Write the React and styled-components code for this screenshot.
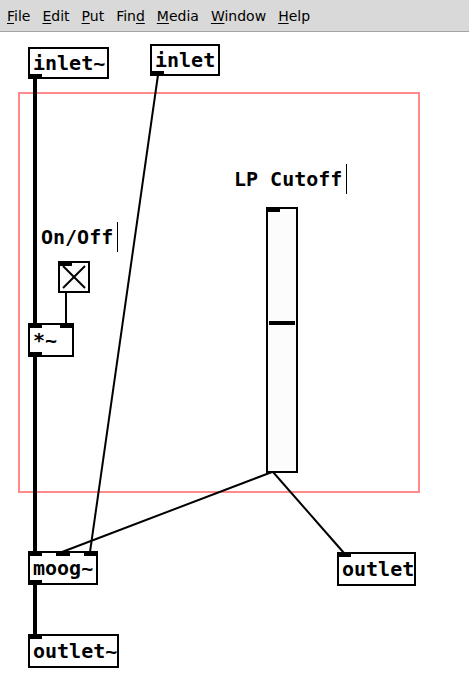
import React from "react";
import styled, { createGlobalStyle } from "styled-components";

const Global = createGlobalStyle`
  html, body { margin: 0; padding: 0; background: #fff; }
  body { width: 469px; height: 698px; overflow: hidden; }
`;

const Page = styled.div`
  width: 469px;
  height: 698px;
  display: flex;
  flex-direction: column;
  background: #fff;
`;

const MenuBar = styled.div`
  height: 31px;
  flex: 0 0 31px;
  display: flex;
  align-items: center;
  gap: 12px;
  padding-left: 7px;
  background: #d9d9d9;
  border-bottom: 1px solid #a3a3a3;
  font-family: "DejaVu Sans", sans-serif;
  font-size: 14px;
  color: #000;
`;

const MenuItem = styled.span`
  white-space: pre;
  u { text-decoration: underline; text-underline-offset: 2px; }
`;

const Canvas = styled.div`
  position: relative;
  flex: 1;
  background: #fff;
`;

const Y0 = 32;

const Cords = styled.svg`
  position: absolute;
  left: 0;
  top: 0;
  width: 469px;
  height: 666px;
  overflow: visible;
`;

const Gop = styled.div`
  position: absolute;
  left: ${(p) => p.$x}px;
  top: ${(p) => p.$y - Y0}px;
  width: ${(p) => p.$w}px;
  height: ${(p) => p.$h}px;
  box-sizing: border-box;
  border: 2px solid #ff8a8a;
`;

const ObjBox = styled.div`
  position: absolute;
  left: ${(p) => p.$x}px;
  top: ${(p) => p.$y - Y0}px;
  width: ${(p) => p.$w}px;
  height: ${(p) => p.$h}px;
  box-sizing: border-box;
  border: 2px solid #000;
  background: #fff;
  display: flex;
  align-items: center;
  padding-left: 3px;
  font-family: "DejaVu Sans Mono", monospace;
  font-weight: bold;
  font-size: 20px;
  color: #000;
  white-space: pre;
`;

const Iolet = styled.div`
  position: absolute;
  left: ${(p) => p.$x}px;
  ${(p) => (p.$bottom ? "bottom: -2px;" : "top: -2px;")}
  width: 14px;
  height: 5px;
  background: #000;
`;

const Comment = styled.div`
  position: absolute;
  left: ${(p) => p.$x}px;
  top: ${(p) => p.$y - Y0}px;
  height: 30px;
  box-sizing: border-box;
  padding-left: 3px;
  padding-right: 4px;
  border-right: 1px solid #000;
  display: flex;
  align-items: center;
  font-family: "DejaVu Sans Mono", monospace;
  font-weight: bold;
  font-size: 20px;
  color: #000;
  white-space: pre;
`;

const Toggle = styled.div`
  position: absolute;
  left: ${(p) => p.$x}px;
  top: ${(p) => p.$y - Y0}px;
  width: ${(p) => p.$s}px;
  height: ${(p) => p.$s}px;
  box-sizing: border-box;
  border: 2px solid #000;
  background: #fcfcfc;
  svg { position: absolute; left: 0; top: 0; }
`;

const Slider = styled.div`
  position: absolute;
  left: ${(p) => p.$x}px;
  top: ${(p) => p.$y - Y0}px;
  width: ${(p) => p.$w}px;
  height: ${(p) => p.$h}px;
  box-sizing: border-box;
  border: 2px solid #000;
  background: #fcfcfc;
`;

const Knob = styled.div`
  position: absolute;
  left: 1px;
  right: 1px;
  top: ${(p) => p.$pos}px;
  height: 4px;
  background: #000;
`;

const menus = [
  ["F", "ile"],
  ["E", "dit"],
  ["P", "ut"],
  ["Fin", "d", ""],
  ["M", "edia"],
  ["W", "indow"],
  ["H", "elp"],
];

function Menu() {
  return (
    <MenuBar>
      {menus.map((m, i) =>
        m.length === 3 ? (
          <MenuItem key={i}>
            {m[0]}
            <u>{m[1]}</u>
          </MenuItem>
        ) : (
          <MenuItem key={i}>
            <u>{m[0]}</u>
            {m[1]}
          </MenuItem>
        )
      )}
    </MenuBar>
  );
}

const cords = [
  // signal cords
  { x1: 35, y1: 78, x2: 35, y2: 324, w: 4 },
  { x1: 35, y1: 356, x2: 35, y2: 552, w: 4 },
  { x1: 35, y1: 584, x2: 35, y2: 635, w: 4 },
  // control cords
  { x1: 66, y1: 291, x2: 66, y2: 324, w: 2 },
  { x1: 158, y1: 75, x2: 90, y2: 552, w: 2 },
  { x1: 272, y1: 472, x2: 62, y2: 552, w: 2 },
  { x1: 273, y1: 472, x2: 344, y2: 553, w: 2 },
];

export default function App() {
  return (
    <Page>
      <Global />
      <Menu />
      <Canvas>
        <Gop $x={18} $y={92} $w={402} $h={401} />
        <Cords viewBox={`0 ${Y0} 469 666`}>
          {cords.map((c, i) => (
            <line
              key={i}
              x1={c.x1}
              y1={c.y1}
              x2={c.x2}
              y2={c.y2}
              stroke="#000"
              strokeWidth={c.w}
            />
          ))}
        </Cords>

        <ObjBox $x={28} $y={47} $w={81} $h={32}>
          inlet~
          <Iolet $x={-2} $bottom />
        </ObjBox>
        <ObjBox $x={150} $y={44} $w={70} $h={32}>
          inlet
          <Iolet $x={-2} $bottom />
        </ObjBox>

        <Comment $x={38} $y={222}>On/Off</Comment>
        <Comment $x={231} $y={164}>LP Cutoff</Comment>

        <Toggle $x={58} $y={261} $s={32}>
          <Iolet $x={-2} />
          <svg width="28" height="28" viewBox="0 0 28 28">
            <line x1="3" y1="3" x2="25" y2="25" stroke="#000" strokeWidth="2" />
            <line x1="25" y1="3" x2="3" y2="25" stroke="#000" strokeWidth="2" />
          </svg>
        </Toggle>

        <ObjBox $x={28} $y={323} $w={46} $h={34}>
          *~
          <Iolet $x={-2} />
          <Iolet $x={30} />
          <Iolet $x={-2} $bottom />
        </ObjBox>

        <Slider $x={266} $y={207} $w={32} $h={266}>
          <Iolet $x={-2} />
          <Knob $pos={112} />
        </Slider>

        <ObjBox $x={28} $y={551} $w={70} $h={34}>
          moog~
          <Iolet $x={-2} />
          <Iolet $x={26} />
          <Iolet $x={54} />
          <Iolet $x={-2} $bottom />
        </ObjBox>

        <ObjBox $x={337} $y={552} $w={79} $h={34}>
          outlet
          <Iolet $x={-2} />
        </ObjBox>

        <ObjBox $x={28} $y={634} $w={91} $h={34}>
          outlet~
          <Iolet $x={-2} />
        </ObjBox>
      </Canvas>
    </Page>
  );
}
